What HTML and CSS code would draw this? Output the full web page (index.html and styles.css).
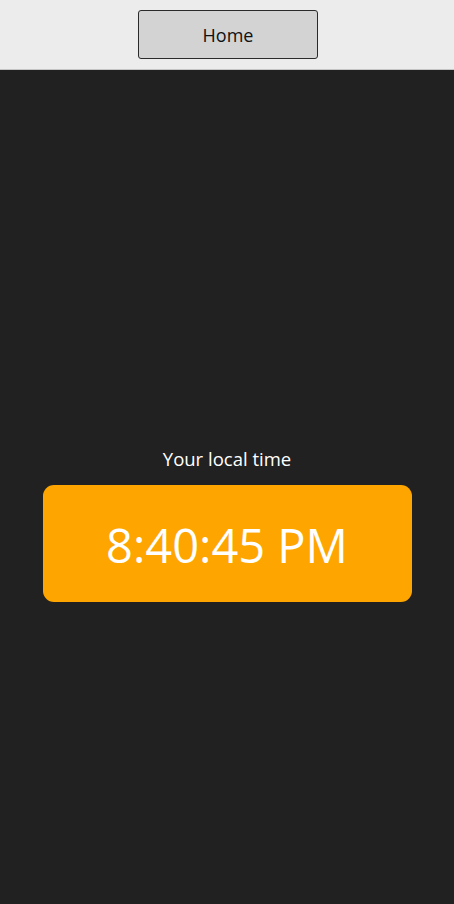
FILE: index.html
```html
<!DOCTYPE html>
<html>
<head>
<meta charset="utf-8">
<link rel="stylesheet" href="styles.css">
</head>
<body>
<header class="topbar">
  <button class="home-btn">Home</button>
</header>
<main class="main">
  <div class="clock">
    <div class="label">Your local time</div>
    <div class="time-box"><span class="time">8:40:45 PM</span></div>
  </div>
</main>
</body>
</html>
```

FILE: styles.css
```css
html, body {
  margin: 0;
  padding: 0;
  height: 100%;
}
body {
  font-family: "Open Sans", "Noto Sans", sans-serif;
  background: #212121;
  display: flex;
  flex-direction: column;
}
.topbar {
  background: #ececec;
  border-bottom: 1px solid #c4c4c4;
  display: flex;
  justify-content: center;
  align-items: flex-start;
  padding-top: 10px;
  box-sizing: border-box;
  height: 70px;
}
.home-btn {
  width: 180px;
  height: 49px;
  margin-left: 2px;
  background: #d3d3d3;
  border: 1px solid #2a2a2a;
  border-radius: 3px;
  font-family: "Open Sans", "Noto Sans", sans-serif;
  font-size: 18px;
  color: #111;
  padding: 0;
}
.main {
  flex: 1;
  display: flex;
  flex-direction: column;
  align-items: center;
  padding-top: 377px;
}
.clock {
  display: flex;
  flex-direction: column;
  align-items: center;
  gap: 14px;
}
.label {
  color: #fff;
  font-size: 18.5px;
  line-height: 24px;
}
.time-box {
  width: 369px;
  height: 117px;
  background: #ffa500;
  border-radius: 11px;
  display: flex;
  align-items: center;
  justify-content: center;
}
.time {
  color: #fff;
  font-size: 47px;
  line-height: 60px;
  padding-top: 2px;
}
```
